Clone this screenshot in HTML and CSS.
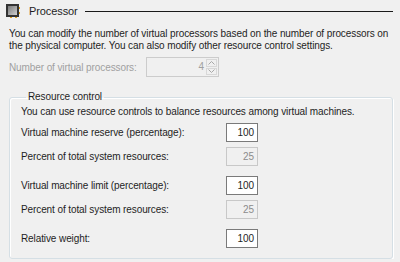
FILE: index.html
```html
<!DOCTYPE html>
<html lang="en">
<head>
    <meta charset="UTF-8">
    <title>Processor</title>
    <link rel="stylesheet" href="styles.css">
</head>
<body>
    <div id="page">
        <div class="head">
            <svg class="icon" width="14" height="14" viewBox="0 0 14 14">
                <defs>
                    <linearGradient id="chip" x1="0" y1="0" x2="1" y2="1">
                        <stop offset="0" stop-color="#7a7a7a"/>
                        <stop offset="1" stop-color="#d0d0d0"/>
                    </linearGradient>
                </defs>
                <rect x="0" y="0" width="13" height="13" fill="#333333"/>
                <rect x="2" y="2" width="9" height="9" fill="url(#chip)"/>
                <rect x="13" y="3" width="1" height="2" fill="#e0a020"/>
                <rect x="13" y="8" width="1" height="2" fill="#e0a020"/>
                <rect x="4" y="13" width="2" height="1" fill="#e0a020"/>
                <rect x="9" y="13" width="2" height="1" fill="#e0a020"/>
            </svg>
            <span class="title">Processor</span>
            <div class="rule"></div>
        </div>

        <p class="desc">You can modify the number of virtual processors based on the number of processors on<br>the physical computer. You can also modify other resource control settings.</p>

        <div class="count">
            <span class="dim">Number of virtual processors:</span>
            <div class="spin">
                <span class="spin-val">4</span>
                <div class="spin-btns">
                    <div class="arrow">
                        <svg width="7" height="4" viewBox="0 0 7 4"><path d="M0.5 3.5 L3.5 0.5 L6.5 3.5" fill="none" stroke="#a8a8a8"/></svg>
                    </div>
                    <div class="arrow">
                        <svg width="7" height="4" viewBox="0 0 7 4"><path d="M0.5 0.5 L3.5 3.5 L6.5 0.5" fill="none" stroke="#a8a8a8"/></svg>
                    </div>
                </div>
            </div>
        </div>

        <fieldset class="group">
            <legend>Resource control</legend>
            <p class="intro">You can use resource controls to balance resources among virtual machines.</p>
            <div class="row">
                <span>Virtual machine reserve (percentage):</span>
                <div class="box">100</div>
            </div>
            <div class="row">
                <span>Percent of total system resources:</span>
                <div class="box off">25</div>
            </div>
            <div class="row gap">
                <span>Virtual machine limit (percentage):</span>
                <div class="box">100</div>
            </div>
            <div class="row">
                <span>Percent of total system resources:</span>
                <div class="box off">25</div>
            </div>
            <div class="row gap">
                <span>Relative weight:</span>
                <div class="box">100</div>
            </div>
        </fieldset>
    </div>
</body>
</html>
```
FILE: styles.css
```css
*{
    margin: 0;
    padding: 0;
    box-sizing: border-box;
}
body{
    background-color: #f0f0f0;
    font-family: "Liberation Sans", Arial, sans-serif;
    font-size: 10px;
    letter-spacing: -0.1px;
    color: #1e1e1e;
}
#page{
    padding: 3px 7px 0 9px;
}
.head{
    display: flex;
    align-items: center;
    height: 16px;
}
.icon{
    margin-left: -3px;
    flex: none;
}
.title{
    margin-left: 9px;
    font-size: 11px;
}
.rule{
    flex: 1;
    height: 1px;
    background-color: #1a1a1a;
    margin-left: 7px;
}
.desc{
    margin-top: 9px;
    line-height: 12px;
    white-space: nowrap;
}
.count{
    display: flex;
    align-items: center;
    margin-top: 5px;
    height: 20px;
}
.dim{
    color: #a0a0a0;
    width: 137px;
}
.spin{
    display: flex;
    width: 73px;
    height: 20px;
    border: 1px solid #cccccc;
    background-color: #f0f0f0;
}
.spin-val{
    flex: 1;
    text-align: right;
    color: #a0a0a0;
    line-height: 18px;
    padding-right: 2px;
}
.spin-btns{
    width: 12px;
    display: flex;
    flex-direction: column;
    padding: 1px 1px 1px 0;
    gap: 1px;
}
.arrow{
    flex: 1;
    display: flex;
    align-items: center;
    justify-content: center;
    border: 1px solid #d8d8d8;
}
.group{
    margin-top: 14px;
    border: 1px solid #d5dfe5;
    border-radius: 3px;
    box-shadow: inset 1px 1px 0 #ffffff, 1px 1px 0 #ffffff;
    height: 168px;
    padding: 0 0 0 11px;
}
.group legend{
    margin-left: 5px;
    padding: 0 2px 0 2px;
    line-height: 12px;
}
.intro{
    margin-top: 2px;
    line-height: 13px;
}
.row{
    display: flex;
    align-items: center;
    height: 19px;
    margin-top: 5px;
}
.row.gap{
    margin-top: 10px;
}
.row span{
    width: 205px;
}
.box{
    width: 32px;
    height: 19px;
    border: 1px solid #7a7a7a;
    background-color: #ffffff;
    text-align: right;
    line-height: 17px;
    padding-right: 3px;
}
.box.off{
    border-color: #c8c8c8;
    background-color: #f0f0f0;
    color: #8c8c8c;
}
```
